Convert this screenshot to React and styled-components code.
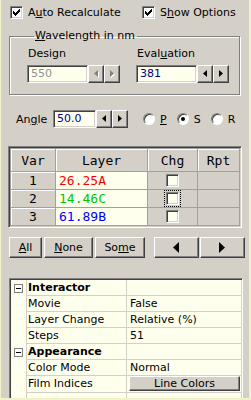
import React from "react";
import styled, { createGlobalStyle, css } from "styled-components";

const GlobalStyle = createGlobalStyle`
  html, body { margin: 0; padding: 0; background: #f2f2c8; }
  body { font-family: "DejaVu Sans", Verdana, sans-serif; font-size: 11px; color: #000; }
`;

const sunken = css`
  border: 1px solid;
  border-color: #808080 #ffffff #ffffff #808080;
  box-shadow: inset 1px 1px #404040, inset -1px -1px #d4d0c8;
`;

const raised = css`
  border: 1px solid;
  border-color: #ffffff #404040 #404040 #ffffff;
  box-shadow: inset -1px -1px #808080, inset 1px 1px #d4d0c8;
`;

const Panel = styled.div`
  width: 248px;
  height: 398px;
  margin-left: 1px;
  background: #d4d0c8;
  overflow: hidden;
  display: flex;
  flex-direction: column;
  box-sizing: border-box;
`;

const TopRow = styled.div`
  display: flex;
  align-items: center;
  padding: 6px 0 0 9px;
  height: 14px;
`;

const CheckLabel = styled.label`
  display: flex;
  align-items: center;
  gap: 5px;
  width: ${(p) => p.$w || "auto"};
  white-space: nowrap;
`;

const Box = styled.span`
  ${sunken};
  box-sizing: border-box;
  width: 13px;
  height: 13px;
  background: ${(p) => p.$bg || "#ffffff"};
  display: inline-flex;
  align-items: center;
  justify-content: center;
  flex: none;
  outline: ${(p) => (p.$focus ? "1px dotted #000" : "none")};
  outline-offset: 1px;
`;

const U = styled.span`
  text-decoration: underline;
`;

const Group = styled.fieldset`
  margin: 10px 0 0 8px;
  width: 231px;
  box-sizing: border-box;
  border: 1px solid #808080;
  box-shadow: inset 1px 1px #ffffff, 1px 1px #ffffff;
  padding: 0 0 11px 17px;
  display: flex;
  gap: 16px;
`;

const Legend = styled.legend`
  margin-left: 7px;
  padding: 0 2px 0 1px;
  line-height: 14px;
`;

const Field = styled.div`
  display: flex;
  flex-direction: column;
`;

const FieldLabel = styled.div`
  padding: 4px 0 5px 1px;
  line-height: 13px;
`;

const SpinRow = styled.div`
  display: flex;
  align-items: stretch;
  height: 18px;
`;

const Edit = styled.div`
  ${sunken};
  box-sizing: border-box;
  width: ${(p) => p.$w}px;
  height: 18px;
  background: #ffffee;
  padding: 1px 0 0 3px;
  line-height: 14px;
  color: ${(p) => (p.$disabled ? "#909090" : "#000080")};
`;

const SpinBtn = styled.div`
  ${raised};
  box-sizing: border-box;
  width: 16px;
  height: 18px;
  background: #d4d0c8;
  display: flex;
  align-items: center;
  justify-content: center;
`;

const AngleRow = styled.div`
  display: flex;
  align-items: center;
  margin: 15px 0 0 15px;
  height: 18px;
`;

const AngleLabel = styled.span`
  width: 37px;
`;

const Radios = styled.div`
  display: flex;
  align-items: center;
  margin-left: 15px;
`;

const Radio = styled.label`
  display: flex;
  align-items: center;
  gap: 5px;
  margin-right: 10px;
`;

const Circle = styled.span`
  width: 12px;
  height: 12px;
  border-radius: 50%;
  box-sizing: border-box;
  background: #ffffff;
  border: 1px solid;
  border-color: #808080 #ffffff #ffffff #808080;
  box-shadow: inset 1px 1px #404040;
  display: inline-flex;
  align-items: center;
  justify-content: center;
  &::after {
    content: "";
    width: 4px;
    height: 4px;
    border-radius: 50%;
    background: ${(p) => (p.$on ? "#000" : "transparent")};
  }
`;

const GridFrame = styled.div`
  ${sunken};
  margin: 18px 0 0 7px;
  width: 234px;
  box-sizing: border-box;
  padding: 1px;
`;

const Table = styled.table`
  border-collapse: collapse;
  width: 100%;
  font-family: "DejaVu Sans Mono", "Liberation Mono", monospace;
  font-size: 13px;
`;

const Th = styled.th`
  font-weight: normal;
  height: 22px;
  padding: 0;
  background: #d4d0c8;
  border: 1px solid #a0a0a0;
  box-shadow: inset 1px 1px #ffffff;
  text-align: center;
  width: ${(p) => p.$w}px;
`;

const Td = styled.td`
  height: 17px;
  padding: 0 0 0 ${(p) => (p.$left ? "3px" : "0")};
  border: 1px solid #a0a0a0;
  background: ${(p) => (p.$fixed || p.$gray ? "#d4d0c8" : "#ffffee")};
  box-shadow: ${(p) => (p.$fixed ? "inset 1px 1px #ffffff" : "none")};
  text-align: ${(p) => (p.$left ? "left" : "center")};
  color: ${(p) => p.$color || "#000"};
  line-height: 17px;
  vertical-align: middle;
`;

const CellCheck = styled.div`
  display: flex;
  justify-content: center;
  align-items: center;
`;

const ButtonRow = styled.div`
  display: flex;
  margin: 9px 0 0 8px;
  height: 21px;
`;

const Btn = styled.button`
  ${raised};
  box-sizing: border-box;
  width: ${(p) => p.$w}px;
  height: 21px;
  margin-right: ${(p) => p.$mr || 2}px;
  background: #d4d0c8;
  font-family: "DejaVu Sans", Verdana, sans-serif;
  font-size: 11px;
  padding: 0;
  color: #000;
  display: flex;
  align-items: center;
  justify-content: center;
`;

const PropFrame = styled.div`
  ${sunken};
  margin: 20px 0 0 8px;
  width: 234px;
  flex: 1;
  box-sizing: border-box;
  background: #ffffee;
  padding: 1px 1px 0 1px;
  margin-bottom: -4px;
`;

const PropRow = styled.div`
  display: grid;
  grid-template-columns: 16px 100px 1fr;
  height: 16px;
`;

const Gutter = styled.div`
  border-right: 1px solid #d4d0c8;
  display: flex;
  align-items: center;
  justify-content: center;
`;

const Name = styled.div`
  border-bottom: 1px solid #d4d0c8;
  border-right: 1px solid #d4d0c8;
  padding-left: 1px;
  line-height: 15px;
  font-weight: ${(p) => (p.$cat ? "bold" : "normal")};
  white-space: nowrap;
  overflow: ${(p) => (p.$cat ? "visible" : "hidden")};
`;

const Value = styled.div`
  border-bottom: 1px solid #d4d0c8;
  padding-left: 3px;
  line-height: 15px;
  white-space: nowrap;
`;

const ValueBtn = styled.div`
  ${raised};
  box-sizing: border-box;
  margin: 0 1px 1px -1px;
  height: 15px;
  background: #d4d0c8;
  text-align: center;
  line-height: 13px;
`;

const Minus = styled.span`
  width: 9px;
  height: 9px;
  box-sizing: border-box;
  border: 1px solid #808080;
  background: #fff;
  display: inline-flex;
  align-items: center;
  justify-content: center;
  &::after {
    content: "";
    width: 5px;
    height: 1px;
    background: #000;
  }
`;

const Check = () => (
  <svg width="7" height="7" viewBox="0 0 7 7">
    <path d="M0 2h1v1h1v1h1V3h1V2h1V1h1V0h1v3H6v1H5v1H4v1H3v1H2V6H1V5H0z" fill="#000" />
  </svg>
);

const Arrow = ({ dir, size = 4, color = "#000", shadow }) => {
  const h = size * 2 - 1;
  const d =
    dir === "left" ? `M${size} 0 L${size} ${h} L0 ${size - 0.5} Z` : `M0 0 L0 ${h} L${size} ${size - 0.5} Z`;
  return (
    <svg width={size + 1} height={h + 1} viewBox={`0 0 ${size + 1} ${h + 1}`}>
      {shadow && <path d={d} fill="#fff" transform="translate(1 1)" />}
      <path d={d} fill={color} />
    </svg>
  );
};

const Spinner = ({ value, w, disabled }) => (
  <SpinRow>
    <Edit $w={w} $disabled={disabled}>{value}</Edit>
    <SpinBtn>
      <Arrow dir="left" color={disabled ? "#808080" : "#000"} shadow={disabled} />
    </SpinBtn>
    <SpinBtn>
      <Arrow dir="right" color={disabled ? "#808080" : "#000"} shadow={disabled} />
    </SpinBtn>
  </SpinRow>
);

const layers = [
  { v: 1, t: "26.25A", c: "#ff0000" },
  { v: 2, t: "14.46C", c: "#00c800", focus: true },
  { v: 3, t: "61.89B", c: "#0000ff" },
];

const props = [
  { cat: true, name: "Interactor" },
  { name: "Movie", value: "False" },
  { name: "Layer Change", value: "Relative (%)" },
  { name: "Steps", value: "51" },
  { cat: true, name: "Appearance" },
  { name: "Color Mode", value: "Normal" },
  { name: "Film Indices", button: "Line Colors" },
  { name: "", value: "" },
];

export default function App() {
  return (
    <>
      <GlobalStyle />
      <Panel>
        <TopRow>
          <CheckLabel $w="132px">
            <Box><Check /></Box>
            <span>A<U>u</U>to Recalculate</span>
          </CheckLabel>
          <CheckLabel>
            <Box><Check /></Box>
            <span>S<U>h</U>ow Options</span>
          </CheckLabel>
        </TopRow>

        <Group>
          <Legend><U>W</U>avelength in nm</Legend>
          <Field>
            <FieldLabel>Design</FieldLabel>
            <Spinner value="550" w={61} disabled />
          </Field>
          <Field>
            <FieldLabel>Eval<U>u</U>ation</FieldLabel>
            <Spinner value="381" w={61} />
          </Field>
        </Group>

        <AngleRow>
          <AngleLabel>An<U>g</U>le</AngleLabel>
          <Spinner value="50.0" w={43} />
          <Radios>
            <Radio><Circle /><U>P</U></Radio>
            <Radio><Circle $on />S</Radio>
            <Radio><Circle />R</Radio>
          </Radios>
        </AngleRow>

        <GridFrame>
          <Table>
            <thead>
              <tr>
                <Th $w={44}>Var</Th>
                <Th $w={91}>Layer</Th>
                <Th $w={49}>Chg</Th>
                <Th>Rpt</Th>
              </tr>
            </thead>
            <tbody>
              {layers.map((l) => (
                <tr key={l.v}>
                  <Td $fixed>{l.v}</Td>
                  <Td $left $color={l.c}>{l.t}</Td>
                  <Td $gray>
                    <CellCheck>
                      <Box $bg="#ffffee" $focus={l.focus} />
                    </CellCheck>
                  </Td>
                  <Td $gray />
                </tr>
              ))}
            </tbody>
          </Table>
        </GridFrame>

        <ButtonRow>
          <Btn $w={33}><U>A</U>ll</Btn>
          <Btn $w={49}><U>N</U>one</Btn>
          <Btn $w={50} $mr={9}>So<U>m</U>e</Btn>
          <Btn $w={45} $mr={1}><Arrow dir="left" size={6} /></Btn>
          <Btn $w={45}><Arrow dir="right" size={6} /></Btn>
        </ButtonRow>

        <PropFrame>
          {props.map((p, i) => (
            <PropRow key={i}>
              <Gutter>{p.cat && <Minus />}</Gutter>
              <Name $cat={p.cat}>{p.name}</Name>
              <Value>
                {p.button ? <ValueBtn>{p.button}</ValueBtn> : p.value}
              </Value>
            </PropRow>
          ))}
        </PropFrame>
      </Panel>
    </>
  );
}
